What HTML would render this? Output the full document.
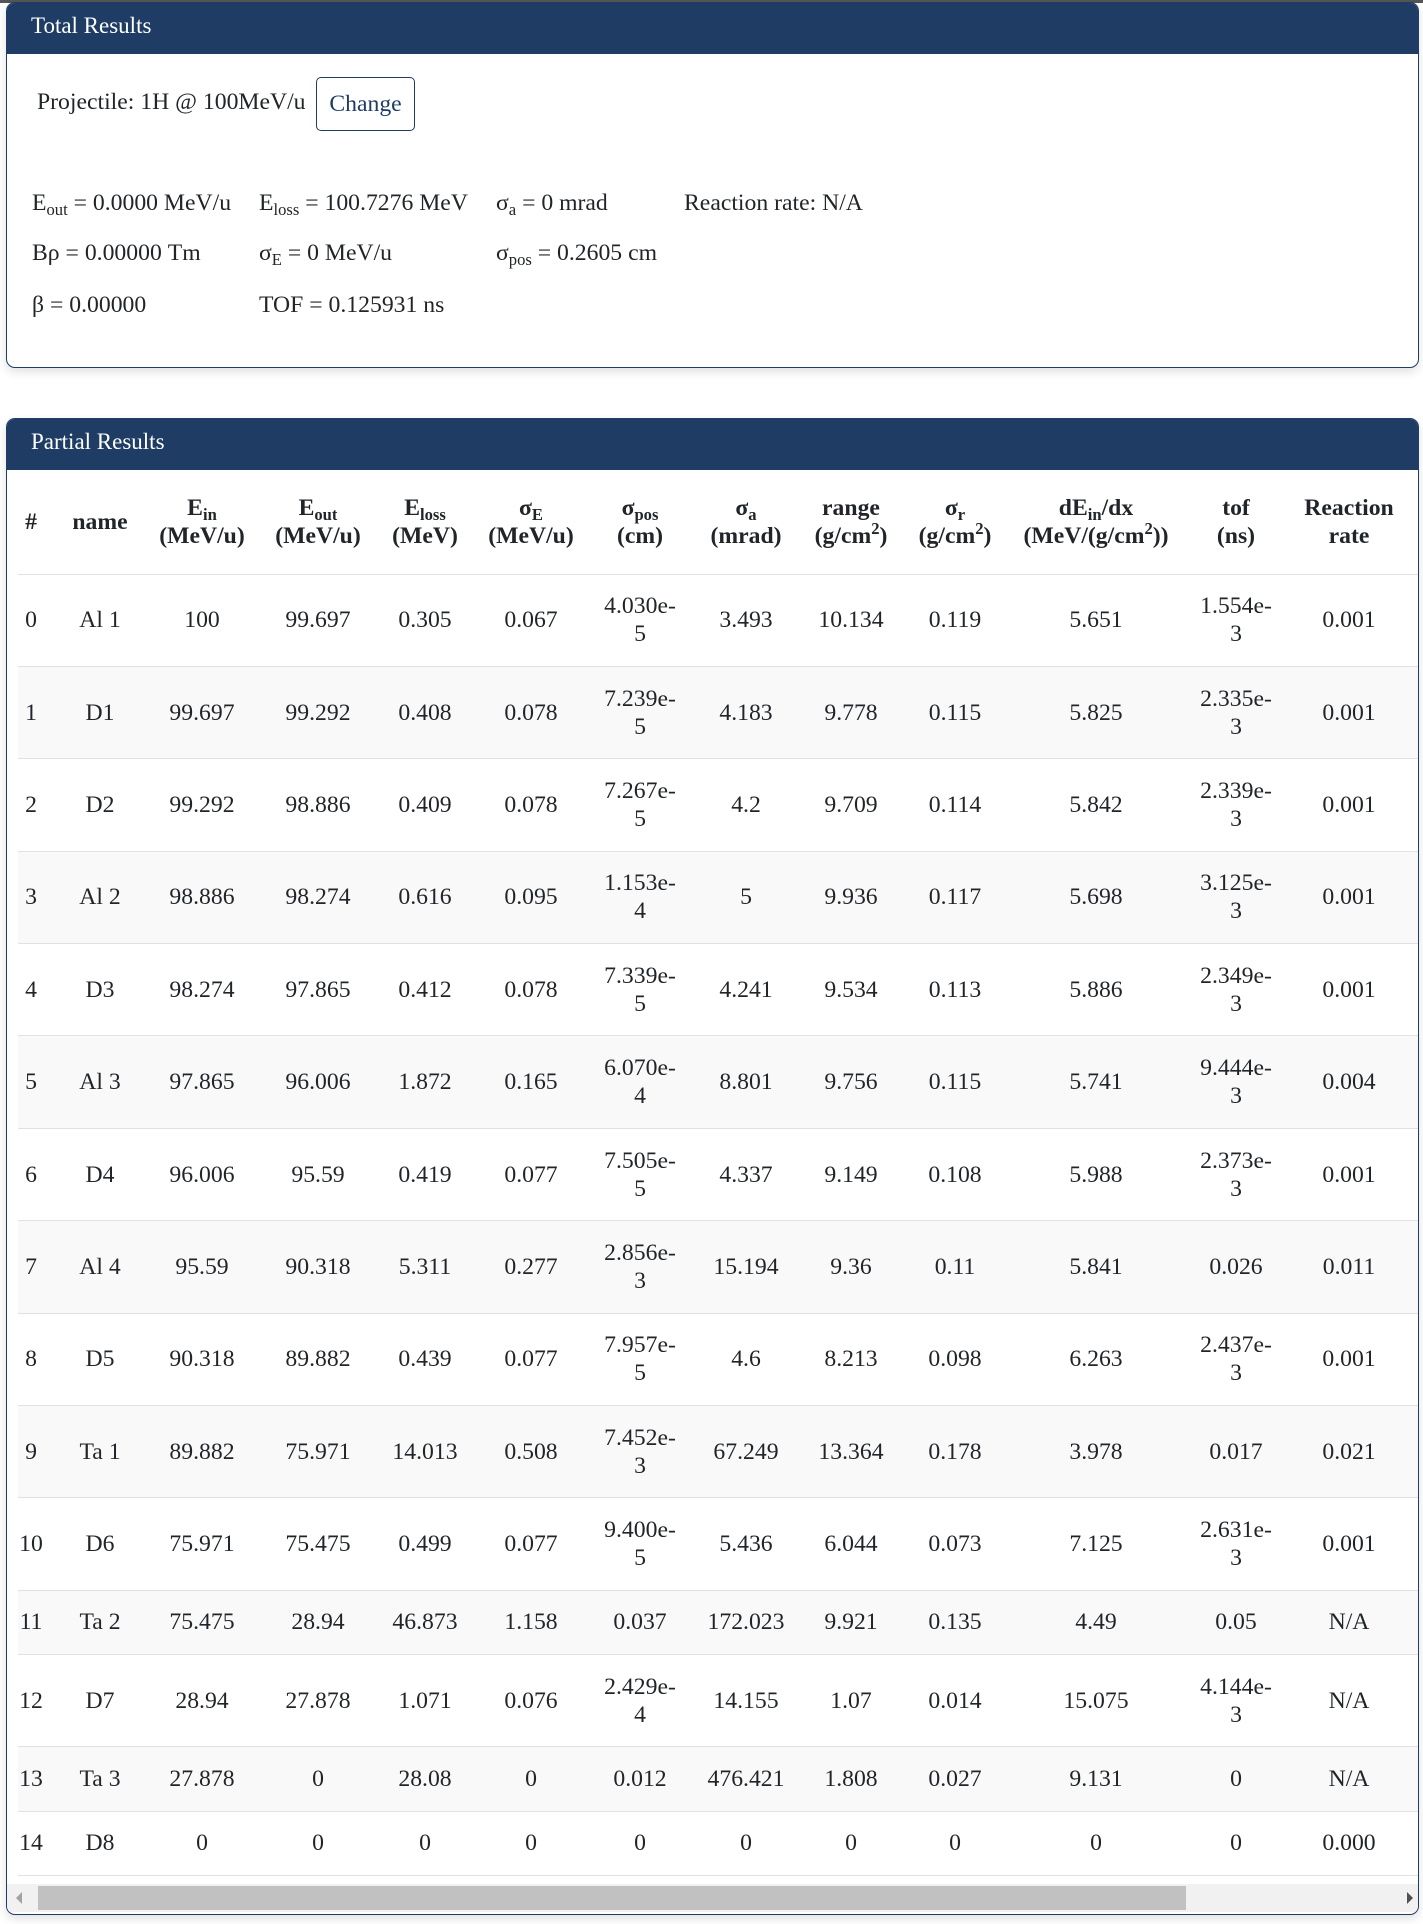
<!DOCTYPE html>
<html><head><meta charset="utf-8"><style>
*{box-sizing:border-box;margin:0;padding:0}
body{width:1423px;height:1924px;background:#fff;font-family:"Liberation Serif",serif;color:#212529;font-size:23.7px;position:relative;overflow:hidden}
.topbar{position:absolute;left:0;top:0;width:1423px;height:3px;background:#555}
.card{position:absolute;left:6px;width:1413px;border:1px solid #1e3c64;border-radius:9px;background:#fff;box-shadow:0 4px 10px rgba(0,0,0,.12);overflow:hidden}
.hdr{background:#1e3c64;color:#fff;height:51px;padding-left:24px;line-height:46px;font-size:23px}
.abs{position:absolute;white-space:nowrap}
sub{font-size:70%;vertical-align:-0.3em;line-height:0}
sup{font-size:70%;vertical-align:0.55em;line-height:0}
.btn{position:absolute;left:309px;top:74px;width:99px;height:54px;border:1px solid #1e3c64;border-radius:5px;color:#1e3c64;text-align:center;line-height:52px}
table{position:absolute;left:11px;top:51px;border-collapse:collapse;table-layout:fixed;width:1402px}
td,th{text-align:center;white-space:nowrap;line-height:28px;padding:0;border-bottom:1px solid #dee2e6}
th{height:104px;font-weight:bold}
tr.t td{height:92.4px}
tr.s td{height:64.3px}
tbody tr:nth-child(even) td{background:#f9f9f9}
.sb{position:absolute;left:0;top:1465px;width:1413px;height:28px;background:#f1f1f1}
.th{position:absolute;left:31px;top:2px;width:1148px;height:24px;background:#c1c1c1}
</style></head><body>
<div class="topbar"></div>
<div class="card" style="top:2px;height:366px">
<div class="hdr">Total Results</div>
<div class="abs" style="left:30px;top:86px">Projectile: 1H @ 100MeV/u</div>
<div class="btn">Change</div>
<div class="abs" style="left:25px;top:187px">E<sub>out</sub> = 0.0000 MeV/u</div>
<div class="abs" style="left:252px;top:187px">E<sub>loss</sub> = 100.7276 MeV</div>
<div class="abs" style="left:489px;top:187px">σ<sub>a</sub> = 0 mrad</div>
<div class="abs" style="left:677px;top:187px">Reaction rate: N/A</div>
<div class="abs" style="left:25px;top:237px">Bρ = 0.00000 Tm</div>
<div class="abs" style="left:252px;top:237px">σ<sub>E</sub> = 0 MeV/u</div>
<div class="abs" style="left:489px;top:237px">σ<sub>pos</sub> = 0.2605 cm</div>
<div class="abs" style="left:25px;top:289px">β = 0.00000</div>
<div class="abs" style="left:252px;top:289px">TOF = 0.125931 ns</div>
</div>
<div class="card" style="top:418px;height:1497px">
<div class="hdr">Partial Results</div>
<table>
<colgroup><col style="width:26px"><col style="width:112px"><col style="width:92px"><col style="width:140px"><col style="width:74px"><col style="width:138px"><col style="width:80px"><col style="width:132px"><col style="width:78px"><col style="width:130px"><col style="width:152px"><col style="width:128px"><col style="width:98px"><col style="width:22px"></colgroup>
<thead><tr><th>#</th><th>name</th><th>E<sub>in</sub><br>(MeV/u)</th><th>E<sub>out</sub><br>(MeV/u)</th><th>E<sub>loss</sub><br>(MeV)</th><th>σ<sub>E</sub><br>(MeV/u)</th><th>σ<sub>pos</sub><br>(cm)</th><th>σ<sub>a</sub><br>(mrad)</th><th>range<br>(g/cm<sup>2</sup>)</th><th>σ<sub>r</sub><br>(g/cm<sup>2</sup>)</th><th>dE<sub>in</sub>/dx<br>(MeV/(g/cm<sup>2</sup>))</th><th>tof<br>(ns)</th><th>Reaction<br>rate</th><th></th></tr></thead>
<tbody>
<tr class="t"><td>0</td><td>Al 1</td><td>100</td><td>99.697</td><td>0.305</td><td>0.067</td><td>4.030e-<br>5</td><td>3.493</td><td>10.134</td><td>0.119</td><td>5.651</td><td>1.554e-<br>3</td><td>0.001</td><td></td></tr>
<tr class="t"><td>1</td><td>D1</td><td>99.697</td><td>99.292</td><td>0.408</td><td>0.078</td><td>7.239e-<br>5</td><td>4.183</td><td>9.778</td><td>0.115</td><td>5.825</td><td>2.335e-<br>3</td><td>0.001</td><td></td></tr>
<tr class="t"><td>2</td><td>D2</td><td>99.292</td><td>98.886</td><td>0.409</td><td>0.078</td><td>7.267e-<br>5</td><td>4.2</td><td>9.709</td><td>0.114</td><td>5.842</td><td>2.339e-<br>3</td><td>0.001</td><td></td></tr>
<tr class="t"><td>3</td><td>Al 2</td><td>98.886</td><td>98.274</td><td>0.616</td><td>0.095</td><td>1.153e-<br>4</td><td>5</td><td>9.936</td><td>0.117</td><td>5.698</td><td>3.125e-<br>3</td><td>0.001</td><td></td></tr>
<tr class="t"><td>4</td><td>D3</td><td>98.274</td><td>97.865</td><td>0.412</td><td>0.078</td><td>7.339e-<br>5</td><td>4.241</td><td>9.534</td><td>0.113</td><td>5.886</td><td>2.349e-<br>3</td><td>0.001</td><td></td></tr>
<tr class="t"><td>5</td><td>Al 3</td><td>97.865</td><td>96.006</td><td>1.872</td><td>0.165</td><td>6.070e-<br>4</td><td>8.801</td><td>9.756</td><td>0.115</td><td>5.741</td><td>9.444e-<br>3</td><td>0.004</td><td></td></tr>
<tr class="t"><td>6</td><td>D4</td><td>96.006</td><td>95.59</td><td>0.419</td><td>0.077</td><td>7.505e-<br>5</td><td>4.337</td><td>9.149</td><td>0.108</td><td>5.988</td><td>2.373e-<br>3</td><td>0.001</td><td></td></tr>
<tr class="t"><td>7</td><td>Al 4</td><td>95.59</td><td>90.318</td><td>5.311</td><td>0.277</td><td>2.856e-<br>3</td><td>15.194</td><td>9.36</td><td>0.11</td><td>5.841</td><td>0.026</td><td>0.011</td><td></td></tr>
<tr class="t"><td>8</td><td>D5</td><td>90.318</td><td>89.882</td><td>0.439</td><td>0.077</td><td>7.957e-<br>5</td><td>4.6</td><td>8.213</td><td>0.098</td><td>6.263</td><td>2.437e-<br>3</td><td>0.001</td><td></td></tr>
<tr class="t"><td>9</td><td>Ta 1</td><td>89.882</td><td>75.971</td><td>14.013</td><td>0.508</td><td>7.452e-<br>3</td><td>67.249</td><td>13.364</td><td>0.178</td><td>3.978</td><td>0.017</td><td>0.021</td><td></td></tr>
<tr class="t"><td>10</td><td>D6</td><td>75.971</td><td>75.475</td><td>0.499</td><td>0.077</td><td>9.400e-<br>5</td><td>5.436</td><td>6.044</td><td>0.073</td><td>7.125</td><td>2.631e-<br>3</td><td>0.001</td><td></td></tr>
<tr class="s"><td>11</td><td>Ta 2</td><td>75.475</td><td>28.94</td><td>46.873</td><td>1.158</td><td>0.037</td><td>172.023</td><td>9.921</td><td>0.135</td><td>4.49</td><td>0.05</td><td>N/A</td><td></td></tr>
<tr class="t"><td>12</td><td>D7</td><td>28.94</td><td>27.878</td><td>1.071</td><td>0.076</td><td>2.429e-<br>4</td><td>14.155</td><td>1.07</td><td>0.014</td><td>15.075</td><td>4.144e-<br>3</td><td>N/A</td><td></td></tr>
<tr class="s"><td>13</td><td>Ta 3</td><td>27.878</td><td>0</td><td>28.08</td><td>0</td><td>0.012</td><td>476.421</td><td>1.808</td><td>0.027</td><td>9.131</td><td>0</td><td>N/A</td><td></td></tr>
<tr class="s"><td>14</td><td>D8</td><td>0</td><td>0</td><td>0</td><td>0</td><td>0</td><td>0</td><td>0</td><td>0</td><td>0</td><td>0</td><td>0.000</td><td></td></tr>
</tbody></table>
<div class="sb"><div class="th"></div>
<svg style="position:absolute;left:8px;top:8px" width="8" height="12"><path d="M7 0L1 6L7 12Z" fill="#a3a3a3"/></svg>
<svg style="position:absolute;right:6px;top:8px" width="8" height="12"><path d="M1 0L7 6L1 12Z" fill="#505050"/></svg>
</div>
</div>
</body></html>
